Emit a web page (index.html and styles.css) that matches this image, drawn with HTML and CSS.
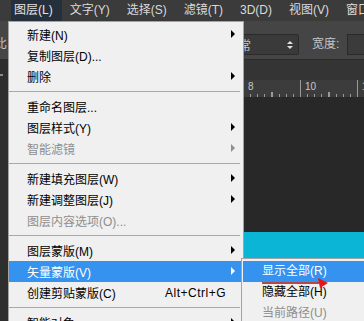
FILE: index.html
```html
<!DOCTYPE html>
<html lang="zh-CN">
<head>
<meta charset="utf-8">
<title>图层菜单</title>
<link rel="stylesheet" href="styles.css">
</head>
<body>
<div class="app">
  <div class="menubar">
    <span class="mb-item active">图层(L)</span>
    <span class="mb-item">文字(Y)</span>
    <span class="mb-item">选择(S)</span>
    <span class="mb-item">滤镜(T)</span>
    <span class="mb-item">3D(D)</span>
    <span class="mb-item">视图(V)</span>
    <span class="mb-item">窗口(W)</span>
  </div>
  <div class="optbar">
    <span class="opt-text cut">对比</span>
    <div class="select">
      <span class="select-text">正常</span>
      <span class="spin"><i class="up"></i><i class="down"></i></span>
    </div>
    <span class="opt-text">宽度:</span>
    <div class="input"></div>
  </div>
  <div class="work">
    <div class="tools"><i class="tool-mark"></i></div>
    <div class="main">
      <div class="tabbar"></div>
      <div class="ruler">
        <span class="rl">8</span>
        <span class="rl">10</span>
        <span class="rl">12</span>
      </div>
      <div class="canvas"></div>
      <div class="doc"></div>
    </div>
  </div>

  <div class="menu">
    <div class="mi"><span class="label">新建(N)</span><span class="arr"><i></i></span></div>
    <div class="mi"><span class="label">复制图层(D)...</span><span class="arr"></span></div>
    <div class="mi"><span class="label">删除</span><span class="arr"><i></i></span></div>
    <div class="sep"><i></i></div>
    <div class="mi"><span class="label">重命名图层...</span><span class="arr"></span></div>
    <div class="mi"><span class="label">图层样式(Y)</span><span class="arr"><i></i></span></div>
    <div class="mi dis"><span class="label">智能滤镜</span><span class="arr"><i></i></span></div>
    <div class="sep"><i></i></div>
    <div class="mi"><span class="label">新建填充图层(W)</span><span class="arr"><i></i></span></div>
    <div class="mi"><span class="label">新建调整图层(J)</span><span class="arr"><i></i></span></div>
    <div class="mi dis"><span class="label">图层内容选项(O)...</span><span class="arr"></span></div>
    <div class="sep"><i></i></div>
    <div class="mi"><span class="label">图层蒙版(M)</span><span class="arr"><i></i></span></div>
    <div class="mi hl"><span class="label">矢量蒙版(V)</span><span class="arr"><i></i></span></div>
    <div class="mi"><span class="label">创建剪贴蒙版(C)</span><span class="sc">Alt+Ctrl+G</span><span class="arr"></span></div>
    <div class="sep"><i></i></div>
    <div class="mi"><span class="label">智能对象</span><span class="arr"><i></i></span></div>
  </div>

  <div class="submenu">
    <div class="smi hl">显示全部(R)</div>
    <div class="smi">隐藏全部(H)</div>
    <div class="smi dis">当前路径(U)</div>
  </div>

  <svg class="annot" width="68" height="13" viewBox="0 0 68 13">
    <line x1="0" y1="6" x2="57" y2="6" stroke="#a30f12" stroke-width="1.5"/>
    <polygon points="56,1 66,6 58,11" fill="#e8141b"/>
  </svg>
</div>
</body>
</html>
```

FILE: styles.css
```css
* { box-sizing: border-box; }

body {
  margin: 0;
  width: 364px;
  height: 321px;
  overflow: hidden;
  font-family: "Liberation Sans", "Noto Sans CJK SC", sans-serif;
  font-size: 12px;
}

.app {
  position: relative;
  width: 364px;
  height: 321px;
  overflow: hidden;
  display: flex;
  flex-direction: column;
  background: #282828;
}

/* menu bar */
.menubar {
  height: 21px;
  flex: none;
  display: flex;
  gap: 5px;
  padding-left: 11px;
  background: #3b3b3b;
  color: #dadada;
  white-space: nowrap;
}
.mb-item {
  flex: none;
  padding: 0 9px 0 3px;
  line-height: 21px;
}
.mb-item.active {
  background: #26303c;
  color: #e4e4e4;
}

/* options bar */
.optbar {
  height: 39px;
  flex: none;
  display: flex;
  align-items: flex-start;
  padding-top: 13px;
  background: #454545;
  border-bottom: 1px solid #2c2c2c;
  color: #c6c6c6;
  white-space: nowrap;
}
.opt-text {
  flex: none;
  line-height: 21px;
}
.opt-text.cut {
  margin-left: -17px;
}
.select {
  flex: none;
  margin-left: 211px;
  width: 81px;
  height: 21px;
  display: flex;
  align-items: center;
  justify-content: space-between;
  padding: 0 5px 0 8px;
  background: #3a3a3a;
  border: 1px solid #2b2b2b;
  border-radius: 2px;
  margin-right: 13px;
}
.spin {
  display: flex;
  flex-direction: column;
  gap: 2px;
}
.spin i {
  width: 0;
  height: 0;
  border-left: 3px solid transparent;
  border-right: 3px solid transparent;
}
.spin .up { border-bottom: 3px solid #e0e0e0; }
.spin .down { border-top: 3px solid #e0e0e0; }
.input {
  flex: none;
  margin-left: 8px;
  width: 40px;
  height: 21px;
  background: #3b3b3b;
  border: 1px solid #2a2a2a;
}

/* work area */
.work {
  flex: 1;
  display: flex;
}
.tools {
  width: 8px;
  flex: none;
  background: #2e2e2e;
  padding-top: 14px;
}
.tool-mark {
  display: block;
  width: 3px;
  height: 2px;
  background: #8a8a8a;
}
.main {
  flex: 1;
  display: flex;
  flex-direction: column;
}
.tabbar {
  height: 20px;
  flex: none;
  background: #343434;
}
.ruler {
  height: 17px;
  flex: none;
  display: flex;
  padding-left: 235px;
  background-color: #3c3c3c;
  background-image:
    repeating-linear-gradient(to right, #9a9a9a 0 1px, transparent 1px 57px),
    repeating-linear-gradient(to right, #9a9a9a 0 1px, transparent 1px 28.5px),
    repeating-linear-gradient(to right, #9a9a9a 0 1px, transparent 1px 7.125px);
  background-size: 100% 100%, 100% 5px, 100% 3px;
  background-position: 7px 0, 7px 100%, 7px 100%;
  background-repeat: no-repeat;
  color: #c8c8c8;
  font-size: 10px;
}
.rl {
  width: 57px;
  flex: none;
  padding-left: 5px;
  line-height: 14px;
}
.canvas {
  height: 135px;
  flex: none;
  background: #282828;
}
.doc {
  flex: 1;
  background: #0bb5d5;
}

/* dropdown menu */
.menu {
  position: absolute;
  left: 8px;
  top: 21px;
  width: 236px;
  padding-top: 2px;
  background: #f0f0f0;
  border: 1px solid #a3a3a3;
  color: #000;
  white-space: nowrap;
}
.mi {
  height: 21px;
  display: flex;
  align-items: center;
  padding-left: 18px;
}
.mi .label {
  flex: 1;
}
.mi .sc {
  letter-spacing: 0.5px;
}
.mi .arr {
  width: 17px;
  flex: none;
  display: flex;
  align-items: center;
}
.mi .arr i {
  display: block;
  margin: -2px 0 0 5px;
  width: 0;
  height: 0;
  border-left: 4px solid #000;
  border-top: 4px solid transparent;
  border-bottom: 4px solid transparent;
}
.mi.dis { color: #8e8e8e; }
.mi.dis .arr i { border-left-color: #8e8e8e; }
.mi.hl { background: #3592ef; color: #fff; }
.mi.hl .arr i { border-left-color: #fff; }
.sep {
  height: 9px;
  display: flex;
  align-items: center;
  padding-right: 3px;
}
.sep i {
  display: block;
  flex: 1;
  height: 1px;
  background: #a8a8a8;
}

/* submenu */
.submenu {
  position: absolute;
  left: 241px;
  top: 258px;
  width: 140px;
  padding: 2px 0 0 1px;
  background: #f0f0f0;
  border: 1px solid #a3a3a3;
  color: #000;
  white-space: nowrap;
}
.smi {
  height: 21px;
  line-height: 21px;
  padding-left: 19px;
}
.smi.hl { background: #3592ef; color: #fff; }
.smi.dis { color: #8e8e8e; }

.annot {
  position: absolute;
  left: 262px;
  top: 277px;
}
```
